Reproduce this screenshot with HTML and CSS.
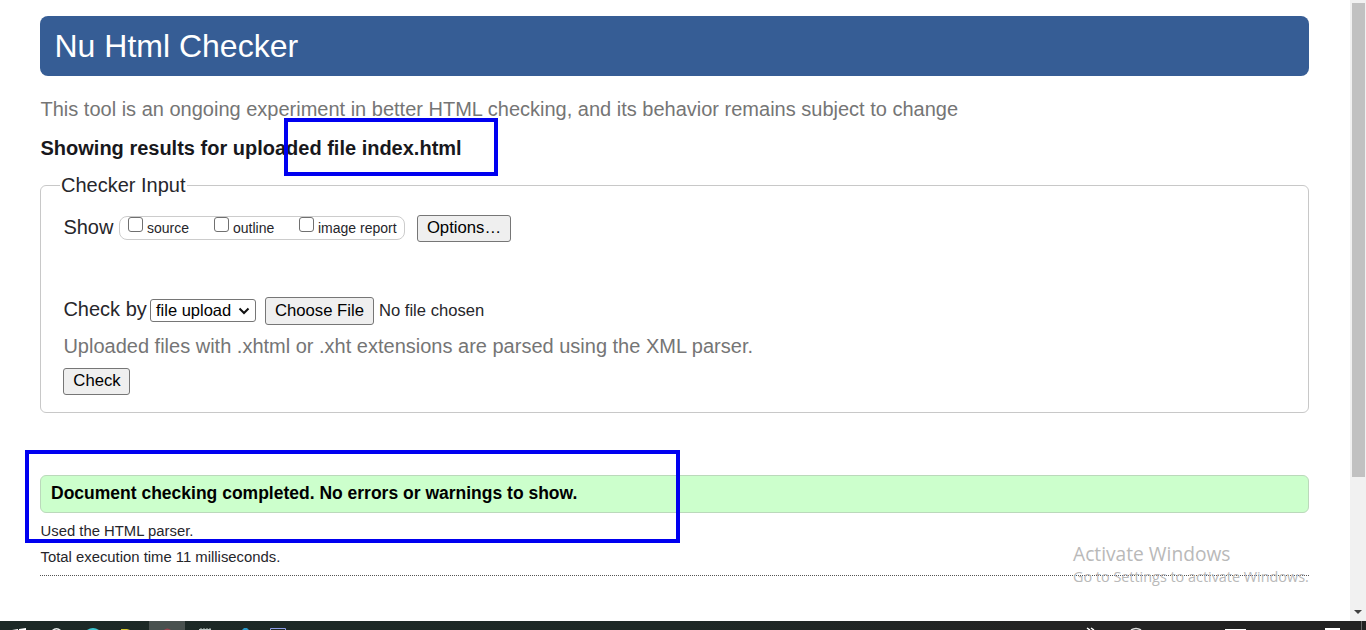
FILE: index.html
```html
<!DOCTYPE html>
<html lang="en">
<head>
<meta charset="utf-8">
<title>Nu Html Checker</title>
<link rel="stylesheet" href="styles.css">
</head>
<body>
<div class="screen">
  <div class="window">
    <main class="page">
      <h1 class="banner">Nu Html Checker</h1>
      <p class="intro">This tool is an ongoing experiment in better HTML checking, and its behavior remains subject to change</p>
      <h2 class="subject">Showing results for uploaded file index.html</h2>
      <fieldset class="input-area">
        <legend class="legend">Checker Input</legend>
        <div class="form">
          <div class="row row-show">
            <span class="label label-show">Show</span>
            <div class="show-options">
              <label class="option option-source"><input class="box" type="checkbox"><span>source</span></label>
              <label class="option option-outline"><input class="box" type="checkbox"><span>outline</span></label>
              <label class="option"><input class="box" type="checkbox"><span>image report</span></label>
            </div>
            <button class="button button-options">Options…</button>
          </div>
          <div class="row row-file">
            <span class="label label-by">Check by</span>
            <div class="select"><span>file upload</span>
              <svg class="chevron" viewBox="0 0 12 8"><path d="M1.500 1.500 6 6l4.500-4.500" fill="none" stroke="#111" stroke-width="2"/></svg>
            </div>
            <button class="button button-choose">Choose File</button>
            <span class="file-name">No file chosen</span>
          </div>
          <p class="hint">Uploaded files with .xhtml or .xht extensions are parsed using the XML parser.</p>
          <button class="button button-check">Check</button>
        </div>
      </fieldset>
      <p class="success">Document checking completed. No errors or warnings to show.</p>
      <p class="detail">Used the HTML parser.</p>
      <p class="detail">Total execution time 11 milliseconds.</p>
      <div class="rule"></div>
    </main>
    <div class="scrollbar">
      <div class="thumb"></div>
      <svg class="arrow" viewBox="0 0 8 4"><path d="M0 0h8L4 4z" fill="#404040"/></svg>
    </div>
  </div>
  <div class="taskbar">
    <svg class="tray" viewBox="0 0 1366 9">
      <defs><linearGradient id="bar"><stop offset="0" stop-color="#1c2926"/><stop offset=".5" stop-color="#1e2826"/><stop offset=".75" stop-color="#232323"/></linearGradient></defs>
      <path d="M0 0h1366v9H0z" fill="url(#bar)"/>
      <path d="M149 0h36v9h-36z" fill="#49514f"/>
      <path d="M12 9l6-1v1zM19 8l7-1v2h-7z" fill="#fff"/>
      <path d="M52 10q4.500-4.500 9 0" fill="none" stroke="#e8eceb" stroke-width="1.500"/>
      <path d="M87 9q6-4 12 0z" fill="#3cc5cf"/>
      <path d="M121 9v-1h6l3 1z" fill="#d5c72e"/>
      <path d="M164 9q3-3 7 0z" fill="#9b4450"/>
      <path d="M199 8.500h12M201 7v2m3-2v2m3-2v2m3-2v2" stroke="#b9c4c1" fill="none"/>
      <path d="M242 9l2-2h3l2 2z" fill="#2898c8"/>
      <path d="M270.500 9V7.500h15V9" fill="none" stroke="#8f9ee8"/>
      <path d="M1087 7l3 2m1-2 3 2" stroke="#fff" stroke-width="1.500"/>
      <path d="M1131 9q5-3 10 0" fill="none" stroke="#ddd" stroke-width="1.500"/>
      <path d="M1225 8h21v1h-21zM1325 7h15v2h-15z" fill="#fff"/>
      <path d="M1361.500 0v9" stroke="#666"/>
    </svg>
  </div>
  <div class="watermark">
    <div class="watermark-title">Activate Windows</div>
    <div class="watermark-text">Go to Settings to activate Windows.</div>
  </div>
  <div class="marker marker-file"></div>
  <div class="marker marker-result"></div>
</div>
</body>
</html>
```
FILE: styles.css
```css
* { box-sizing: border-box; }
body { margin: 0; overflow: hidden; background: #fff; color: #26262b; font-family: "Liberation Sans", Arial, sans-serif; }
h1, h2, p { margin: 0; }
.screen { position: relative; display: flex; flex-direction: column; height: 630px; }
.window { display: flex; flex: 1; }
.page { flex: 1; padding: 16px 41px 0 40px; }
.banner { height: 60px; padding-left: 14.500px; border-radius: 8px; background: #365d95; color: #fff; font-size: 32px; font-weight: 400; line-height: 60px; }
.intro { margin: 21px 0 15px 0.500px; color: #757575; font-size: 20px; line-height: 24px; }
.subject { margin: 0 0 13px 0.500px; color: #18181c; font-size: 20px; line-height: 24px; }
.input-area { height: 240px; margin: 0; padding: 0 22px; border: 1px solid #c8c8c8; border-radius: 6px; }
.legend { height: 24px; margin-left: -3px; padding: 0 1px; font-size: 20px; line-height: 24px; }
.form { padding-top: 18px; }
.row { display: flex; align-items: flex-start; white-space: nowrap; }
.row-show { height: 82px; }
.row-file { height: 37px; }
.label { padding-left: 0.400px; font-size: 20px; line-height: 24px; }
.label-show { width: 56px; }
.label-by { width: 87px; }
.show-options { display: flex; width: 286px; height: 24px; margin: 1px 12px 0 0; padding-left: 8px; border: 1px solid #ccc; border-radius: 8px; font-size: 14px; line-height: 23px; }
.option { display: flex; gap: 4px; }
.option-source { width: 86px; }
.option-outline { width: 85px; }
.box { appearance: none; width: 15px; height: 15px; margin: 0; border: 1px solid #707070; border-radius: 3px; background: #fff; }
.button { display: block; height: 27px; padding: 0; border: 1px solid #767676; border-radius: 3px; background: #efefef; color: #000; font: 16.7px/24px "Liberation Sans", Arial, sans-serif; text-align: center; }
.button-options { width: 94px; padding-bottom: 2px; }
.button-choose { width: 109px; height: 28px; margin-left: 9px; }
.button-check { width: 67px; margin-top: 10px; padding: 0 0 2px 1px; }
.select { display: flex; align-items: center; justify-content: space-between; width: 106px; height: 23px; margin-top: 2px; padding: 0 5px; border: 1px solid #767676; border-radius: 3px; color: #000; font-size: 16.500px; }
.chevron { width: 12px; height: 8px; }
.file-name { margin-left: 5px; font-size: 16.600px; line-height: 28px; }
.hint { padding-left: 0.400px; color: #757575; font-size: 20px; line-height: 24px; }
.success { height: 38px; margin: 62px 0 5px; padding-left: 10px; border: 1px solid #bbd9bb; border-radius: 6px; background: #cfc; color: #000; font-size: 17.500px; font-weight: 700; line-height: 35px; }
.detail { padding-left: 0.500px; font-size: 14.850px; line-height: 26px; }
.rule { margin-top: 5px; border-top: 1px dotted #555; }
.scrollbar { display: flex; flex-direction: column; align-items: center; justify-content: space-between; width: 16px; padding: 3px 0 7px; background: #f1f1f1; }
.thumb { width: 13px; height: 474px; background: #c1c1c1; }
.arrow { width: 8px; height: 4px; }
.taskbar { height: 9px; }
.tray { display: block; width: 1366px; height: 9px; }
.watermark { position: absolute; top: 540px; left: 1073px; color: #b9b9b9; font-family: "Open Sans", "Noto Sans", sans-serif; white-space: nowrap; }
.watermark-title { font-size: 19.200px; line-height: 28px; }
.watermark-text { font-size: 14.400px; line-height: 18px; }
.marker { position: absolute; border: 4px solid #0000f0; }
.marker-file { top: 118px; left: 284px; width: 214px; height: 58px; }
.marker-result { top: 450px; left: 25px; width: 655px; height: 93px; }
```
